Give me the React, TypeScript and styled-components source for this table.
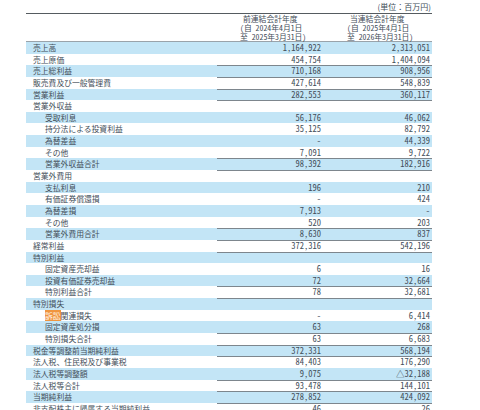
import React from 'react';
import styled, { createGlobalStyle } from 'styled-components';

const GlobalStyle = createGlobalStyle`
  html, body {
    margin: 0;
    padding: 0;
    background: #ffffff;
  }
  body {
    font-family: "Noto Sans CJK JP", "Noto Sans", sans-serif;
    color: #424d58;
  }
`;

const Sheet = styled.div`
  width: 406px;
  margin-left: 26px;
`;

const UnitNote = styled.div`
  height: 13px;
  font-size: 8px;
  line-height: 13px;
  text-align: right;
  padding-right: 1px;
`;

const Columns = styled.div`
  display: grid;
  grid-template-columns: 191px 107px 108px;
`;

const Header = styled(Columns)`
  border-top: 1px solid #555b60;
  border-bottom: 1px solid #9aa3aa;
  height: 27px;
`;

const HeaderCell = styled.div`
  padding: 1px 0 0 23px;
  font-size: 7.8px;
  line-height: 8.8px;
  white-space: nowrap;
  font-feature-settings: "hwid";
`;

const HeaderTitle = styled.div`
  padding-left: 3px;
`;

const Row = styled(Columns)<{ $shaded: boolean }>`
  height: 11.65px;
  background: ${(p) => (p.$shaded ? '#c3e5f6' : 'transparent')};
  font-size: 7.8px;
  line-height: 11.65px;
`;

const Label = styled.div<{ $indent: boolean }>`
  padding-left: ${(p) => (p.$indent ? 19 : 7)}px;
  white-space: nowrap;
  overflow: hidden;
`;

const Num = styled.div<{ $ruled: boolean; $pad: number }>`
  text-align: right;
  padding-right: ${(p) => p.$pad}px;
  font-size: 8.5px;
  font-feature-settings: "hwid";
  box-shadow: ${(p) => (p.$ruled ? 'inset 0 1px 0 #7d868d' : 'none')};
`;

const Flag = styled.span`
  background: #f0953f;
  color: #fff4e6;
`;

type Line = {
  label: string;
  prev?: string;
  cur?: string;
  indent?: boolean;
  ruled?: boolean;
  flag?: string;
};

const lines: Line[] = [
  { label: '売上高', prev: '1,164,922', cur: '2,313,051' },
  { label: '売上原価', prev: '454,754', cur: '1,404,094' },
  { label: '売上総利益', prev: '710,168', cur: '908,956', ruled: true },
  { label: '販売費及び一般管理費', prev: '427,614', cur: '548,839', ruled: true },
  { label: '営業利益', prev: '282,553', cur: '360,117', ruled: true },
  { label: '営業外収益', ruled: true },
  { label: '受取利息', prev: '56,176', cur: '46,062', indent: true },
  { label: '持分法による投資利益', prev: '35,125', cur: '82,792', indent: true },
  { label: '為替差益', prev: '－', cur: '44,339', indent: true },
  { label: 'その他', prev: '7,091', cur: '9,722', indent: true },
  { label: '営業外収益合計', prev: '98,392', cur: '182,916', indent: true, ruled: true },
  { label: '営業外費用', ruled: true },
  { label: '支払利息', prev: '196', cur: '210', indent: true },
  { label: '有価証券償還損', prev: '－', cur: '424', indent: true },
  { label: '為替差損', prev: '7,913', cur: '－', indent: true },
  { label: 'その他', prev: '520', cur: '203', indent: true },
  { label: '営業外費用合計', prev: '8,630', cur: '837', indent: true, ruled: true },
  { label: '経常利益', prev: '372,316', cur: '542,196', ruled: true },
  { label: '特別利益', ruled: true },
  { label: '固定資産売却益', prev: '6', cur: '16', indent: true },
  { label: '投資有価証券売却益', prev: '72', cur: '32,664', indent: true },
  { label: '特別利益合計', prev: '78', cur: '32,681', indent: true, ruled: true },
  { label: '特別損失', ruled: true },
  { label: '関連損失', flag: '訴訟', prev: '－', cur: '6,414', indent: true },
  { label: '固定資産処分損', prev: '63', cur: '268', indent: true },
  { label: '特別損失合計', prev: '63', cur: '6,683', indent: true, ruled: true },
  { label: '税金等調整前当期純利益', prev: '372,331', cur: '568,194', ruled: true },
  { label: '法人税、住民税及び事業税', prev: '84,403', cur: '176,290', ruled: true },
  { label: '法人税等調整額', prev: '9,075', cur: '△32,188' },
  { label: '法人税等合計', prev: '93,478', cur: '144,101', ruled: true },
  { label: '当期純利益', prev: '278,852', cur: '424,092', ruled: true },
  { label: '非支配株主に帰属する当期純利益', prev: '46', cur: '26', ruled: true },
];

export default function App() {
  return (
    <>
      <GlobalStyle />
      <Sheet>
        <UnitNote>(単位：百万円)</UnitNote>
        <Header>
          <div />
          <HeaderCell>
            <HeaderTitle>前連結会計年度</HeaderTitle>
            <div>(自 2024年4月1日</div>
            <div>至 2025年3月31日)</div>
          </HeaderCell>
          <HeaderCell>
            <HeaderTitle>当連結会計年度</HeaderTitle>
            <div>(自 2025年4月1日</div>
            <div>至 2026年3月31日)</div>
          </HeaderCell>
        </Header>
        {lines.map((line, i) => (
          <Row key={i} $shaded={i % 2 === 0}>
            <Label $indent={!!line.indent}>
              {line.flag && <Flag>{line.flag}</Flag>}
              {line.label}
            </Label>
            <Num $ruled={!!line.ruled} $pad={3}>
              {line.prev}
            </Num>
            <Num $ruled={!!line.ruled} $pad={2}>
              {line.cur}
            </Num>
          </Row>
        ))}
      </Sheet>
    </>
  );
}
